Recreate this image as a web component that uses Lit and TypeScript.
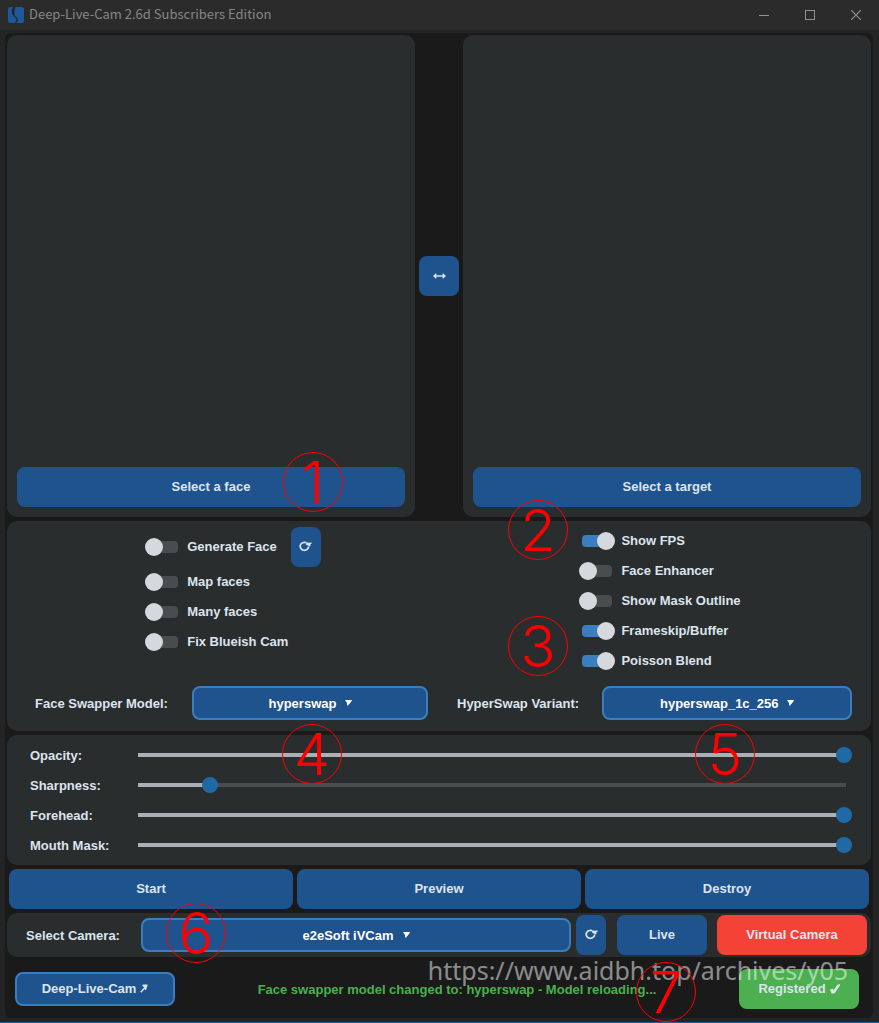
import { LitElement, html, css, svg } from "lit";
import { customElement, state } from "lit/decorators.js";
import { styleMap } from "lit/directives/style-map.js";

interface Toggle { id: string; label: string; on: boolean; refresh?: boolean }
interface Slider { id: string; label: string; value: number }
interface Marker { n: number; x: number; y: number }

const refreshIcon = html`<svg class="refresh" viewBox="0 0 13 11" width="13" height="11" aria-hidden="true">
  ${svg`<path d="M7 1.6A4.2 4 0 1 0 9.6 5.4" fill="none" stroke="currentColor" stroke-width="1.7"/><path d="M7.6 1L9 1.8L12.6 1.6V2.8L11.4 3.2V5.2H10.2L6.8 3.4Z" fill="currentColor"/>`}
</svg>`;

@customElement("app-root")
export class AppRoot extends LitElement {
  @state() private leftToggles: Toggle[] = [
    { id: "generate", label: "Generate Face", on: false, refresh: true },
    { id: "map", label: "Map faces", on: false },
    { id: "many", label: "Many faces", on: false },
    { id: "blueish", label: "Fix Blueish Cam", on: false },
  ];
  @state() private rightToggles: Toggle[] = [
    { id: "fps", label: "Show FPS", on: true },
    { id: "enhancer", label: "Face Enhancer", on: false },
    { id: "outline", label: "Show Mask Outline", on: false },
    { id: "frameskip", label: "Frameskip/Buffer", on: true },
    { id: "poisson", label: "Poisson Blend", on: true },
  ];
  @state() private sliders: Slider[] = [
    { id: "opacity", label: "Opacity:", value: 100 },
    { id: "sharpness", label: "Sharpness:", value: 10 },
    { id: "forehead", label: "Forehead:", value: 100 },
    { id: "mouth", label: "Mouth Mask:", value: 100 },
  ];
  private markers: Marker[] = [
    { n: 1, x: 313, y: 482 },
    { n: 2, x: 538, y: 530 },
    { n: 3, x: 538, y: 646 },
    { n: 4, x: 312, y: 754 },
    { n: 5, x: 725, y: 754 },
    { n: 6, x: 196, y: 933 },
    { n: 7, x: 666, y: 992 },
  ];

  static styles = css`
    * { box-sizing: border-box; }
    :host {
      box-sizing: border-box;
      position: relative;
      display: flex;
      flex-direction: column;
      min-height: 100vh;
      overflow: hidden;
      background: #242424;
      border-bottom: 1px solid #1f5f99;
      color: #dce4ee;
      font: bold 13px/17px "Liberation Sans", Arial, sans-serif;
    }
    .titlebar {
      display: flex;
      align-items: center;
      height: 30px;
      padding-left: 8px;
      background: #2b2b2b;
      color: #868686;
      font: 13px/16px "Noto Sans CJK SC", sans-serif;
    }
    .logo { margin-right: 5px; }
    .title { flex: 1; margin: 0; padding-bottom: 2px; font: inherit; }
    .caption {
      display: grid;
      place-items: center;
      width: 46px;
      height: 30px;
      padding: 0 0 1px;
      border: 0;
      background: none;
      color: #929292;
    }
    .frame {
      flex: 1;
      display: flex;
      flex-direction: column;
      gap: 4px;
      margin: 3px 6px 4px 5px;
      padding: 2px;
      border-radius: 6px;
      background: #1a1a1a;
    }
    .panel { border-radius: 10px; background: #292d2e; }
    .stage {
      flex: 1;
      display: grid;
      grid-template-columns: 1fr 48px 1fr;
      align-items: center;
      justify-items: center;
      min-height: 482px;
    }
    .preview {
      align-self: stretch;
      justify-self: stretch;
      display: flex;
      flex-direction: column;
      justify-content: flex-end;
      padding: 10px;
    }
    .btn {
      display: flex;
      align-items: center;
      justify-content: center;
      gap: 4px;
      height: 40px;
      padding: 0 0 1px;
      border: 0;
      border-radius: 8px;
      background: #1f538d;
      color: inherit;
      font: inherit;
      white-space: nowrap;
    }
    .square { width: 40px; }
    .small { width: 30px; }
    .live { width: 90px; }
    .virtual { width: 150px; background: #f44336; }
    .registered { width: 120px; background: #4caf50; }
    .outlined { width: 160px; height: 34px; border: 2px solid #3a7ebf; }

    .options { padding: 5px 19px 11px 0; }
    .toggles { display: grid; grid-template-columns: 1fr 1fr; margin-right: -19px; }
    .column { display: flex; flex-direction: column; justify-self: center; }
    .column.left { padding: 1px 0 0 20px; }
    .column.right { padding-left: 10px; }
    .row { display: flex; align-items: center; gap: 14px; min-height: 30px; }
    .toggle { display: flex; align-items: center; gap: 6px; line-height: 18px; }
    .switch {
      appearance: none;
      display: flex;
      align-items: center;
      width: 30px;
      height: 12px;
      margin: 0 3px;
      border-radius: 4px;
      background: #4a4d50;
    }
    .switch::before {
      content: "";
      flex: none;
      width: 18px;
      height: 18px;
      margin: 0 -3px;
      border-radius: 9px;
      background: #d5d9de;
    }
    .switch:checked { justify-content: flex-end; background: #3a7ebf; }
    .models {
      display: grid;
      grid-template-columns: 157px 236fr 174px 250fr;
      align-items: center;
      margin-top: 10px;
      padding-left: 28px;
    }
    .variant { padding-left: 29px; }
    .dropdown {
      display: flex;
      align-items: center;
      justify-content: center;
      gap: 8px;
      height: 34px;
      border: 2px solid #3a7ebf;
      border-radius: 8px;
      background: #1f538d;
      color: #fff;
    }
    .dropdown select {
      appearance: none;
      border: 0;
      padding: 0;
      background: none;
      color: inherit;
      font: inherit;
    }
    .sliders { padding: 5px 19px 5px 23px; }
    .slider { display: grid; grid-template-columns: 102px 1fr; align-items: center; height: 30px; }
    .range {
      appearance: none;
      width: 100%;
      height: 16px;
      margin: 0;
      background: linear-gradient(#aab0b5, #aab0b5) 6px center / calc((100% - 16px) * var(--fill)) 4px no-repeat,
        linear-gradient(#4a4d50, #4a4d50) center / calc(100% - 12px) 4px no-repeat;
    }
    .range::-webkit-slider-thumb {
      appearance: none;
      width: 16px;
      height: 16px;
      border-radius: 8px;
      background: #1f6aa5;
    }
    .actions { display: grid; grid-template-columns: repeat(3, 1fr); gap: 4px; padding: 0 2px; }
    .camera { display: flex; align-items: center; height: 44px; padding: 0 4px 0 19px; }
    .camera label { width: 115px; }
    .camera .dropdown { flex: 1; margin-right: 5px; }
    .camera .small { margin-right: 11px; }
    .camera .live { margin-right: 10px; }
    .footer { display: flex; align-items: center; padding: 8px 12px 7px 8px; }
    .status { flex: 1; margin: 0; text-align: center; color: #4caf50; }

    .watermark {
      position: absolute;
      right: 31px;
      bottom: 36px;
      color: rgba(255, 255, 255, 0.5);
      font: 25px/32px "Noto Sans", sans-serif;
      white-space: nowrap;
      pointer-events: none;
    }
    .marker {
      position: absolute;
      display: grid;
      place-items: center;
      width: 60px;
      height: 60px;
      margin: -30px 0 0 -30px;
      border: 1px solid #f00;
      border-radius: 30px;
      color: #f00;
      font: 300 58px/58px Inter, "Liberation Sans", sans-serif;
      pointer-events: none;
    }
  `;

  private toggleRow(t: Toggle) {
    return html`<div class="row">
      <label class="toggle"><input class="switch" type="checkbox" .checked=${t.on} />${t.label}</label>
      ${t.refresh ? html`<button class="btn small" aria-label="Generate again">${refreshIcon}</button>` : null}
    </div>`;
  }

  private dropdown(id: string, value: string) {
    return html`<div class="dropdown">
      <select id=${id}><option>${value}</option></select>
      <svg width="7" height="6" viewBox="0 0 7 6" aria-hidden="true"><path d="M0 0H7L6 2L3 5.6H2V3Z" fill="currentColor" /></svg>
    </div>`;
  }

  private sliderRow(s: Slider, i: number) {
    const update = (e: Event) => {
      const value = Number((e.target as HTMLInputElement).value);
      this.sliders = this.sliders.map((o, k) => (k === i ? { ...o, value } : o));
    };
    return html`<div class="slider">
      <label for=${s.id}>${s.label}</label>
      <input class="range" id=${s.id} type="range" min="0" max="100" .value=${String(s.value)}
        style=${styleMap({ "--fill": String(s.value / 100) })} @input=${update} />
    </div>`;
  }

  render() {
    return html`
      <header class="titlebar">
        <svg class="logo" width="16" height="16" viewBox="0 0 16 16" aria-hidden="true">
          <rect width="16" height="16" rx="2" fill="#1f5798" />
          <path d="M5.2 0L4 4L4.4 7L6.6 9.6L9 12L7.4 16L9.6 14L9.8 12L6.4 8.4L6 5L6.4 2L7 0Z" fill="#222" stroke="#222" stroke-width=".4" />
        </svg>
        <h1 class="title">Deep-Live-Cam 2.6d Subscribers Edition</h1>
        <button class="caption" aria-label="Minimize"><svg width="10" height="10"><path d="M0 5.5H10" stroke="currentColor" /></svg></button>
        <button class="caption" aria-label="Maximize"><svg width="10" height="10"><rect x=".5" y=".5" width="9" height="9" fill="none" stroke="currentColor" /></svg></button>
        <button class="caption" aria-label="Close"><svg width="10" height="10"><path d="M0 0L10 10M10 0L0 10" stroke="currentColor" stroke-width="1.2" /></svg></button>
      </header>
      <main class="frame">
        <section class="stage">
          <div class="panel preview"><button class="btn">Select a face</button></div>
          <button class="btn square" aria-label="Swap">
            <svg width="13" height="6" viewBox="0 0 13 6" aria-hidden="true"><path d="M1 3H12M3.4 .8L1 3L3.4 5.2M9.6 .8L12 3L9.6 5.2" fill="none" stroke="currentColor" stroke-width="1.3" /></svg>
          </button>
          <div class="panel preview"><button class="btn">Select a target</button></div>
        </section>
        <section class="panel options">
          <div class="toggles">
            <div class="column left">${this.leftToggles.map((t) => this.toggleRow(t))}</div>
            <div class="column right">${this.rightToggles.map((t) => this.toggleRow(t))}</div>
          </div>
          <div class="models">
            <label for="model">Face Swapper Model:</label>
            ${this.dropdown("model", "hyperswap")}
            <label class="variant" for="variant">HyperSwap Variant:</label>
            ${this.dropdown("variant", "hyperswap_1c_256")}
          </div>
        </section>
        <section class="panel sliders">${this.sliders.map((s, i) => this.sliderRow(s, i))}</section>
        <section class="actions">
          <button class="btn">Start</button>
          <button class="btn">Preview</button>
          <button class="btn">Destroy</button>
        </section>
        <section class="panel camera">
          <label for="camera">Select Camera:</label>
          ${this.dropdown("camera", "e2eSoft iVCam")}
          <button class="btn small" aria-label="Refresh cameras">${refreshIcon}</button>
          <button class="btn live">Live</button>
          <button class="btn virtual">Virtual Camera</button>
        </section>
        <footer class="footer">
          <button class="btn outlined">Deep-Live-Cam
            <svg width="8" height="9" viewBox="0 0 8 9" aria-hidden="true"><path d="M.8 8.2L5 3.6" stroke="currentColor" stroke-width="1.5" /><path d="M2.5 .5H7.5V1.5L6 6H5L4.6 3.4L2.5 2Z" fill="currentColor" /></svg>
          </button>
          <p class="status">Face swapper model changed to: hyperswap - Model reloading...</p>
          <button class="btn registered">Registered
            <svg width="10" height="10" viewBox="0 0 10 10" aria-hidden="true"><path d="M0 5.4L2.8 4.8L3.6 6.2L7.6 .6L10 .2V1.4L4.4 9.6H1.6Z" fill="currentColor" /></svg>
          </button>
        </footer>
      </main>
      <div class="watermark">https://www.aidbh.top/archives/y05</div>
      ${this.markers.map((m) => html`<div class="marker" style=${styleMap({ left: `${m.x}px`, top: `${m.y}px` })}>${m.n}</div>`)}
    `;
  }
}
